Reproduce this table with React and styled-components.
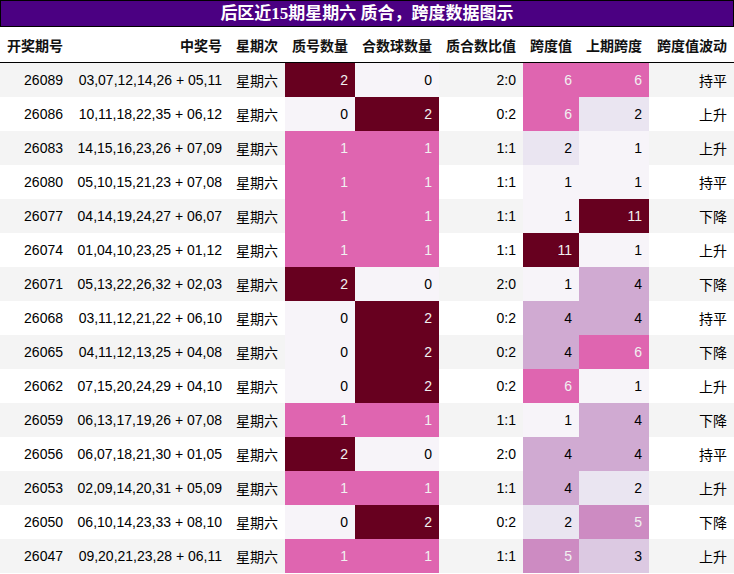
import React from "react";
import styled, { createGlobalStyle } from "styled-components";

const Global = createGlobalStyle`
  html, body { margin: 0; padding: 0; background: #ffffff; }
  body { font-family: "Liberation Sans", "Noto Sans CJK SC", sans-serif; }
`;

const Wrap = styled.div`
  width: 734px;
`;

const Title = styled.div`
  box-sizing: border-box;
  height: 27px;
  border: 1px solid #000;
  background: #4b0082;
  color: #fff;
  font-family: "Liberation Serif", "Noto Sans CJK SC", serif;
  font-weight: bold;
  font-size: 17px;
  line-height: 25px;
  text-align: center;
`;

const Table = styled.table`
  width: 734px;
  border-collapse: collapse;
  table-layout: fixed;
  font-size: 14px;
  color: #000;
`;

const HeadCell = styled.th`
  height: 35px;
  padding: 0 7px;
  font-weight: bold;
  font-size: 14px;
  text-align: ${(p) => (p.$left ? "left" : "right")};
  border-bottom: 1px solid #000;
  white-space: nowrap;
  color: #111;
`;

const Row = styled.tr`
  height: 34px;
  background: ${(p) => (p.$odd ? "#f4f4f4" : "#ffffff")};
`;

const Cell = styled.td`
  padding: 0 7px;
  text-align: right;
  white-space: nowrap;
  background: ${(p) => p.$bg || "transparent"};
  color: ${(p) => p.$fg || "#000"};
`;

const stops = [
  [247, 244, 249],
  [231, 225, 239],
  [212, 185, 218],
  [201, 148, 199],
  [223, 101, 176],
  [231, 41, 138],
  [206, 18, 86],
  [152, 0, 67],
  [103, 0, 31],
];

function purd(t) {
  const x = Math.max(0, Math.min(1, t)) * 8;
  const i = Math.min(7, Math.floor(x));
  const f = x - i;
  const a = stops[i];
  const b = stops[i + 1];
  const c = a.map((v, k) => Math.round(v + (b[k] - v) * f));
  const lin = c.map((v) => {
    const s = v / 255;
    return s <= 0.04045 ? s / 12.92 : Math.pow((s + 0.055) / 1.055, 2.4);
  });
  const L = 0.2126 * lin[0] + 0.7152 * lin[1] + 0.0722 * lin[2];
  return { bg: `rgb(${c[0]},${c[1]},${c[2]})`, fg: L < 0.408 ? "#f1f1f1" : "#000000" };
}

const data = [
  ["26089", "03,07,12,14,26 + 05,11", 2, 0, "2:0", 6, 6, "持平"],
  ["26086", "10,11,18,22,35 + 06,12", 0, 2, "0:2", 6, 2, "上升"],
  ["26083", "14,15,16,23,26 + 07,09", 1, 1, "1:1", 2, 1, "上升"],
  ["26080", "05,10,15,21,23 + 07,08", 1, 1, "1:1", 1, 1, "持平"],
  ["26077", "04,14,19,24,27 + 06,07", 1, 1, "1:1", 1, 11, "下降"],
  ["26074", "01,04,10,23,25 + 01,12", 1, 1, "1:1", 11, 1, "上升"],
  ["26071", "05,13,22,26,32 + 02,03", 2, 0, "2:0", 1, 4, "下降"],
  ["26068", "03,11,12,21,22 + 06,10", 0, 2, "0:2", 4, 4, "持平"],
  ["26065", "04,11,12,13,25 + 04,08", 0, 2, "0:2", 4, 6, "下降"],
  ["26062", "07,15,20,24,29 + 04,10", 0, 2, "0:2", 6, 1, "上升"],
  ["26059", "06,13,17,19,26 + 07,08", 1, 1, "1:1", 1, 4, "下降"],
  ["26056", "06,07,18,21,30 + 01,05", 2, 0, "2:0", 4, 4, "持平"],
  ["26053", "02,09,14,20,31 + 05,09", 1, 1, "1:1", 4, 2, "上升"],
  ["26050", "06,10,14,23,33 + 08,10", 0, 2, "0:2", 2, 5, "下降"],
  ["26047", "09,20,21,23,28 + 06,11", 1, 1, "1:1", 5, 3, "上升"],
];

const widths = [70, 159, 56, 70, 84, 84, 56, 70, 85];
const heads = ["开奖期号", "中奖号", "星期次", "质号数量", "合数球数量", "质合数比值", "跨度值", "上期跨度", "跨度值波动"];

function range(col) {
  const vals = data.map((r) => r[col]);
  return [Math.min(...vals), Math.max(...vals)];
}
const ranges = { 2: range(2), 3: range(3), 5: range(5), 6: range(6) };

function shade(col, v) {
  const [mn, mx] = ranges[col];
  return purd((v - mn) / (mx - mn));
}

export default function App() {
  return (
    <Wrap>
      <Global />
      <Title>后区近15期星期六 质合，跨度数据图示</Title>
      <Table>
        <colgroup>
          {widths.map((w, i) => (
            <col key={i} style={{ width: w }} />
          ))}
        </colgroup>
        <thead>
          <tr>
            {heads.map((h, i) => (
              <HeadCell key={h} $left={i === 0}>{h}</HeadCell>
            ))}
          </tr>
        </thead>
        <tbody>
          {data.map((r, i) => {
            const c2 = shade(2, r[2]);
            const c3 = shade(3, r[3]);
            const c5 = shade(5, r[5]);
            const c6 = shade(6, r[6]);
            return (
              <Row key={r[0]} $odd={i % 2 === 0}>
                <Cell>{r[0]}</Cell>
                <Cell>{r[1]}</Cell>
                <Cell>星期六</Cell>
                <Cell $bg={c2.bg} $fg={c2.fg}>{r[2]}</Cell>
                <Cell $bg={c3.bg} $fg={c3.fg}>{r[3]}</Cell>
                <Cell>{r[4]}</Cell>
                <Cell $bg={c5.bg} $fg={c5.fg}>{r[5]}</Cell>
                <Cell $bg={c6.bg} $fg={c6.fg}>{r[6]}</Cell>
                <Cell>{r[7]}</Cell>
              </Row>
            );
          })}
        </tbody>
      </Table>
    </Wrap>
  );
}
